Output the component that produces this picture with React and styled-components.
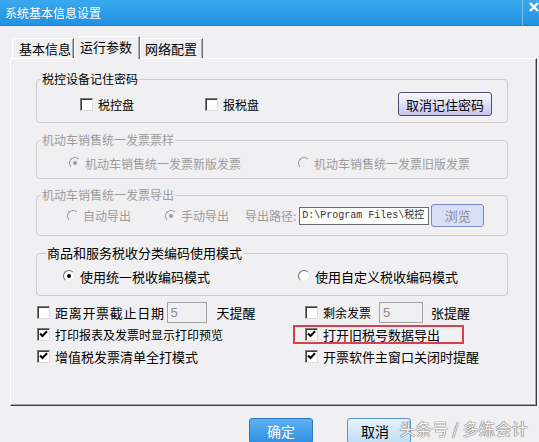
import React from "react";
import styled, { createGlobalStyle, css } from "styled-components";

const GlobalStyle = createGlobalStyle`
  body {
    margin: 0;
    background: #f0eff1;
  }
`;

const Win = styled.div`
  position: relative;
  width: 539px;
  height: 442px;
  overflow: hidden;
  background: #f0eff1;
  font-family: "Noto Sans CJK SC", "Liberation Sans", sans-serif;
  font-size: 12px;
  color: #000;
`;

const TitleBar = styled.div`
  display: flex;
  align-items: center;
  height: 25px;
  border-bottom: 1px solid #1f80c9;
  background: linear-gradient(#3aa9ee, #2291e0);
`;

const Title = styled.div`
  padding-left: 5px;
  color: #fff;
  font-size: 12px;
`;

const Close = styled.div`
  margin-left: auto;
  width: 17px;
  height: 25px;
  border-left: 1px solid #78c2f0;
  display: flex;
  align-items: flex-start;
  justify-content: flex-end;
  padding-top: 2px;
  box-sizing: border-box;
`;

const Tabs = styled.div`
  display: flex;
  align-items: flex-end;
  height: 22px;
  margin: 10px 0 0 12px;
`;

const Tab = styled.div`
  position: relative;
  display: flex;
  align-items: center;
  box-sizing: border-box;
  width: ${(p) => p.$w}px;
  height: 20px;
  padding-left: ${(p) => p.$pl || 6}px;
  border-top: 1px solid #fff;
  border-left: 1px solid #fff;
  border-right: 1px solid #6a6a6a;
  box-shadow: inset -1px 0 #b0b0b0;
  font-size: 13px;
  ${(p) =>
    p.$active &&
    css`
      height: 23px;
      margin-bottom: -1px;
      padding-bottom: 3px;
      background: #f0eff1;
      z-index: 1;
    `}
`;

const Panel = styled.div`
  box-sizing: border-box;
  width: 527px;
  height: 348px;
  margin-left: 10px;
  padding: 13px 0 0 25px;
  border-top: 1px solid #fff;
  border-left: 1px solid #fff;
  border-right: 1px solid #3c3c3c;
  border-bottom: 1px solid #3c3c3c;
  box-shadow: inset -1px -1px #a8a8a8;
`;

const Group = styled.fieldset`
  box-sizing: border-box;
  width: 472px;
  min-width: 0;
  margin: ${(p) => p.$mt || 0}px 0 0;
  padding: 0;
  border: 1px solid #cdcbd0;
  border-radius: 4px;
`;

const Legend = styled.legend`
  margin-left: ${(p) => p.$ml || 4}px;
  padding: 0 1px;
  line-height: 14px;
  font-size: ${(p) => p.$fs || 12}px;
  color: ${(p) => (p.$dim ? "#9c9c9c" : "#000")};
`;

const GroupBody = styled.div`
  display: flex;
  align-items: center;
  padding: ${(p) => p.$pad};
  height: ${(p) => p.$h}px;
`;

const Item = styled.label`
  display: inline-flex;
  align-items: center;
  flex: none;
  gap: ${(p) => p.$gap || 4}px;
  width: ${(p) => (p.$w ? `${p.$w}px` : "auto")};
  font-size: ${(p) => p.$fs || 12}px;
  letter-spacing: ${(p) => p.$ls || 0}px;
  color: ${(p) => (p.$dim ? "#9c9c9c" : "#000")};
`;

const Box = styled.span`
  box-sizing: border-box;
  width: 13px;
  height: 13px;
  flex: none;
  display: flex;
  align-items: center;
  justify-content: center;
  background: #fff;
  border: 1px solid;
  border-color: #7a7a7a #dcdcdc #dcdcdc #7a7a7a;
  box-shadow: inset 1px 1px #3c3c3c;
`;

const Dot = styled.span`
  box-sizing: border-box;
  width: 12px;
  height: 12px;
  flex: none;
  border-radius: 50%;
  display: flex;
  align-items: center;
  justify-content: center;
  background: ${(p) => (p.$dim ? "#f0eff1" : "#fff")};
  border: 1px solid;
  border-color: ${(p) =>
    p.$dim ? "#9a9a9a #f4f4f4 #f4f4f4 #9a9a9a" : "#6c6c6c #e8e8e8 #e8e8e8 #6c6c6c"};
  &::after {
    content: "";
    display: ${(p) => (p.$on ? "block" : "none")};
    width: 4px;
    height: 4px;
    border-radius: 50%;
    background: ${(p) => (p.$dim ? "#9a9a9a" : "#000")};
  }
`;

const Btn = styled.button`
  box-sizing: border-box;
  width: ${(p) => p.$w}px;
  height: ${(p) => p.$h}px;
  padding: 0;
  font-family: inherit;
  font-size: 13px;
  border-radius: 3px;
  ${(p) =>
    p.$kind === "lav" &&
    css`
      margin-left: auto;
      border: 1px solid #4c4c6c;
      background: linear-gradient(#f8f8fe, #c6c6ee);
      color: #000;
    `}
  ${(p) =>
    p.$kind === "off" &&
    css`
      margin-left: 2px;
      border: 1px solid #7c88c8;
      background: #dadff8;
      color: #8a8c9c;
    `}
  ${(p) =>
    p.$kind === "ok" &&
    css`
      border: 1px solid #2a78bf;
      background: linear-gradient(#5cb2f2, #2f8fe0);
      color: #fff;
      font-size: 14px;
    `}
  ${(p) =>
    p.$kind === "cancel" &&
    css`
      border: 1px solid #5b95c6;
      background: linear-gradient(#e6f3fc, #c0def5);
      color: #000;
      font-size: 14px;
      padding-right: 8px;
    `}
`;

const Label = styled.span`
  color: ${(p) => (p.$dim ? "#9c9c9c" : "#000")};
  margin-left: ${(p) => p.$ml || 0}px;
  font-size: ${(p) => p.$fs || 12}px;
`;

const PathInput = styled.div`
  box-sizing: border-box;
  width: 130px;
  height: 18px;
  margin-left: 3px;
  padding-left: 2px;
  overflow: hidden;
  white-space: nowrap;
  background: #fff;
  border: 1px solid #6c6c6c;
  font-family: "Liberation Mono", "Noto Sans CJK SC", monospace;
  font-size: 10px;
  line-height: 16px;
  color: #333;
`;

const NumInput = styled.div`
  box-sizing: border-box;
  width: ${(p) => p.$w}px;
  height: 21px;
  margin-left: ${(p) => p.$ml || 2}px;
  padding-left: 3px;
  border: 1px solid #a4a4a4;
  font-family: "Liberation Sans", sans-serif;
  font-size: 13px;
  line-height: 19px;
  color: #8c8c8c;
`;

const Options = styled.div`
  display: grid;
  grid-template-columns: 268px 200px;
  grid-auto-rows: 22px;
  margin: 5px 0 0 1px;
`;

const Cell = styled.div`
  position: relative;
  display: flex;
  align-items: center;
  ${(p) =>
    p.$marked &&
    css`
      &::after {
        content: "";
        position: absolute;
        left: -12px;
        top: 2px;
        width: 171px;
        height: 19px;
        box-sizing: border-box;
        border: 2px solid #d8414c;
      }
    `}
`;

const Footer = styled.div`
  display: flex;
  gap: 34px;
  margin-top: 12px;
  padding-left: 249px;
`;

const Watermark = styled.div`
  position: absolute;
  right: 11px;
  bottom: 2px;
  font-size: 16px;
  letter-spacing: 0.3px;
  color: #f7f7f7;
  text-shadow: 0 0 1px #6e6e6e, 0 0 1px #6e6e6e, 0 0 1px #6e6e6e;
  white-space: nowrap;
`;

const Tick = () => (
  <svg width="9" height="8" viewBox="0 0 9 8">
    <path d="M1 3.5 L3.5 6 L8 1.2" fill="none" stroke="#000" strokeWidth="2" />
  </svg>
);

const Check = ({ checked, children, ...rest }) => (
  <Item $gap={5} {...rest}>
    <Box>{checked && <Tick />}</Box>
    {children}
  </Item>
);

const Radio = ({ on, dim, children, ...rest }) => (
  <Item $dim={dim} {...rest}>
    <Dot $on={on} $dim={dim} />
    {children}
  </Item>
);

export default function App() {
  return (
    <Win>
      <GlobalStyle />
      <TitleBar>
        <Title>系统基本信息设置</Title>
        <Close>
          <svg width="12" height="10" viewBox="0 0 12 10">
            <path d="M3 1 L11 9 M11 1 L3 9" stroke="#fff" strokeWidth="2.4" />
          </svg>
        </Close>
      </TitleBar>

      <Tabs>
        <Tab $w={62} $pl={6}>基本信息</Tab>
        <Tab $w={66} $pl={5} $active>运行参数</Tab>
        <Tab $w={63} $pl={4}>网络配置</Tab>
      </Tabs>

      <Panel>
        <Group>
          <Legend>税控设备记住密码</Legend>
          <GroupBody $pad="6px 15px 6px 43px" $h={24}>
            <Check $w={125}>税控盘</Check>
            <Check>报税盘</Check>
            <Btn $kind="lav" $w={94} $h={24}>取消记住密码</Btn>
          </GroupBody>
        </Group>

        <Group $mt={10}>
          <Legend $dim>机动车销售统一发票票样</Legend>
          <GroupBody $pad="8px 0 7px 32px" $h={16}>
            <Radio dim on $w={229}>机动车销售统一发票新版发票</Radio>
            <Radio dim>机动车销售统一发票旧版发票</Radio>
          </GroupBody>
        </Group>

        <Group $mt={9}>
          <Legend $dim>机动车销售统一发票导出</Legend>
          <GroupBody $pad="2px 0 8px 30px" $h={23}>
            <Radio dim $w={98}>自动导出</Radio>
            <Radio dim on $w={80}>手动导出</Radio>
            <Label $dim>导出路径:</Label>
            <PathInput>D:\Program Files\税控</PathInput>
            <Btn $kind="off" $w={53} $h={23}>浏览</Btn>
          </GroupBody>
        </Group>

        <Group $mt={10}>
          <Legend $fs={13} $ml={9}>商品和服务税收分类编码使用模式</Legend>
          <GroupBody $pad="8px 0 11px 26px" $h={16}>
            <Radio on $w={235} $gap={5} $fs={13}>使用统一税收编码模式</Radio>
            <Radio $gap={5} $fs={13}>使用自定义税收编码模式</Radio>
          </GroupBody>
        </Group>

        <Options>
          <Cell>
            <Check $fs={13} $ls={0.7}>距离开票截止日期</Check>
            <NumInput $w={40}>5</NumInput>
            <Label $ml={10} $fs={13}>天提醒</Label>
          </Cell>
          <Cell>
            <Check $fs={12}>剩余发票</Check>
            <NumInput $w={44} $ml={8}>5</NumInput>
            <Label $ml={8} $fs={13}>张提醒</Label>
          </Cell>
          <Cell>
            <Check checked $fs={12}>打印报表及发票时显示打印预览</Check>
          </Cell>
          <Cell $marked>
            <Check checked $fs={13}>打开旧税号数据导出</Check>
          </Cell>
          <Cell>
            <Check checked $fs={13}>增值税发票清单全打模式</Check>
          </Cell>
          <Cell>
            <Check checked $fs={13}>开票软件主窗口关闭时提醒</Check>
          </Cell>
        </Options>
      </Panel>

      <Footer>
        <Btn $kind="ok" $w={64} $h={26}>确定</Btn>
        <Btn $kind="cancel" $w={64} $h={26}>取消</Btn>
      </Footer>

      <Watermark>头条号 / 多练会计</Watermark>
    </Win>
  );
}
